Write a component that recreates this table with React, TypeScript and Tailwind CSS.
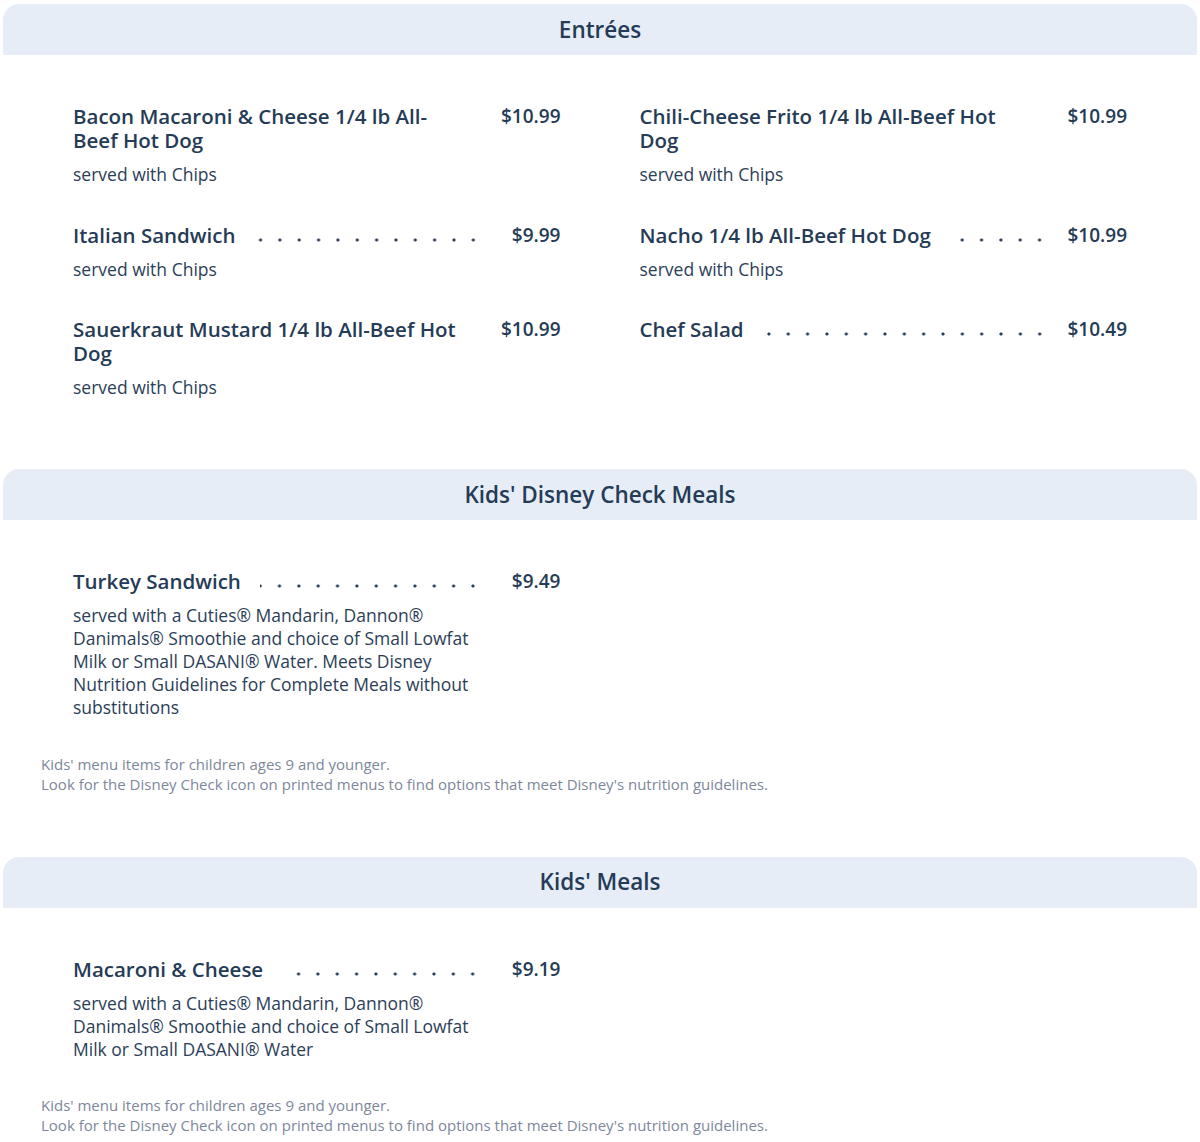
import React from "react"

interface MenuItem {
  name: string
  price: string
  desc?: string
}

interface Section {
  title: string
  items: MenuItem[]
  note?: boolean
}

const CHIPS = "served with Chips"
const KIDS_SIDES =
  "served with a Cuties® Mandarin, Dannon® Danimals® Smoothie and choice of Small Lowfat Milk or Small DASANI® Water"

const sections: Section[] = [
  {
    title: "Entrées",
    items: [
      { name: "Bacon Macaroni & Cheese 1/4 lb All-Beef Hot Dog", price: "$10.99", desc: CHIPS },
      { name: "Chili-Cheese Frito 1/4 lb All-Beef Hot Dog", price: "$10.99", desc: CHIPS },
      { name: "Italian Sandwich", price: "$9.99", desc: CHIPS },
      { name: "Nacho 1/4 lb All-Beef Hot Dog", price: "$10.99", desc: CHIPS },
      { name: "Sauerkraut Mustard 1/4 lb All-Beef Hot Dog", price: "$10.99", desc: CHIPS },
      { name: "Chef Salad", price: "$10.49" },
    ],
  },
  {
    title: "Kids' Disney Check Meals",
    note: true,
    items: [
      {
        name: "Turkey Sandwich",
        price: "$9.49",
        desc: KIDS_SIDES + ". Meets Disney Nutrition Guidelines for Complete Meals without substitutions",
      },
    ],
  },
  {
    title: "Kids' Meals",
    note: true,
    items: [{ name: "Macaroni & Cheese", price: "$9.19", desc: KIDS_SIDES }],
  },
]

function Item({ item }: { item: MenuItem }) {
  return (
    <div>
      <div className="flex items-start">
        <h3 className="pr-[19px] text-[20.5px] leading-[24px] font-semibold">{item.name}</h3>
        {/* dotted leader, anchored to the price side; a wrapped name leaves it no room */}
        <div className="h-[24px] min-w-0 flex-1 basis-0 bg-[radial-gradient(circle_at_50%_17px,#253b56_1.3px,transparent_1.8px)] bg-[length:19.35px_24px] bg-right bg-repeat-x" />
        <div className="w-[78px] shrink-0 text-right text-[19px] leading-[24px] font-semibold">{item.price}</div>
      </div>
      {item.desc && (
        <p className="mt-[11px] w-[400px] text-[17.5px] leading-[23px] text-[#2c3e57]">{item.desc}</p>
      )}
    </div>
  )
}

export default function App() {
  return (
    <div
      className="bg-white px-[3px] pt-[4px] text-[#253b56]"
      style={{ fontFamily: "'Open Sans', Lato, sans-serif" }}
    >
      {sections.map((s, i) => (
        <section key={s.title} className={i < sections.length - 1 ? (s.note ? "mb-[63px]" : "mb-[70px]") : ""}>
          <div className="flex h-[51px] items-center justify-center rounded-t-[16px] bg-[#e6edf6]">
            <h2 className="text-[22.5px] font-semibold">{s.title}</h2>
          </div>
          <div className="pt-[49px]">
            <div className="grid grid-cols-2 gap-x-[79px] gap-y-[36.5px] px-[70px]">
              {s.items.map((it) => (
                <Item key={it.name} item={it} />
              ))}
            </div>
            {s.note && (
              <div className="mt-[34.5px] pl-[38px] text-[15px] leading-[20px] text-[#7d879b]">
                <p>Kids' menu items for children ages 9 and younger.</p>
                <p>Look for the Disney Check icon on printed menus to find options that meet Disney's nutrition guidelines.</p>
              </div>
            )}
          </div>
        </section>
      ))}
    </div>
  )
}
